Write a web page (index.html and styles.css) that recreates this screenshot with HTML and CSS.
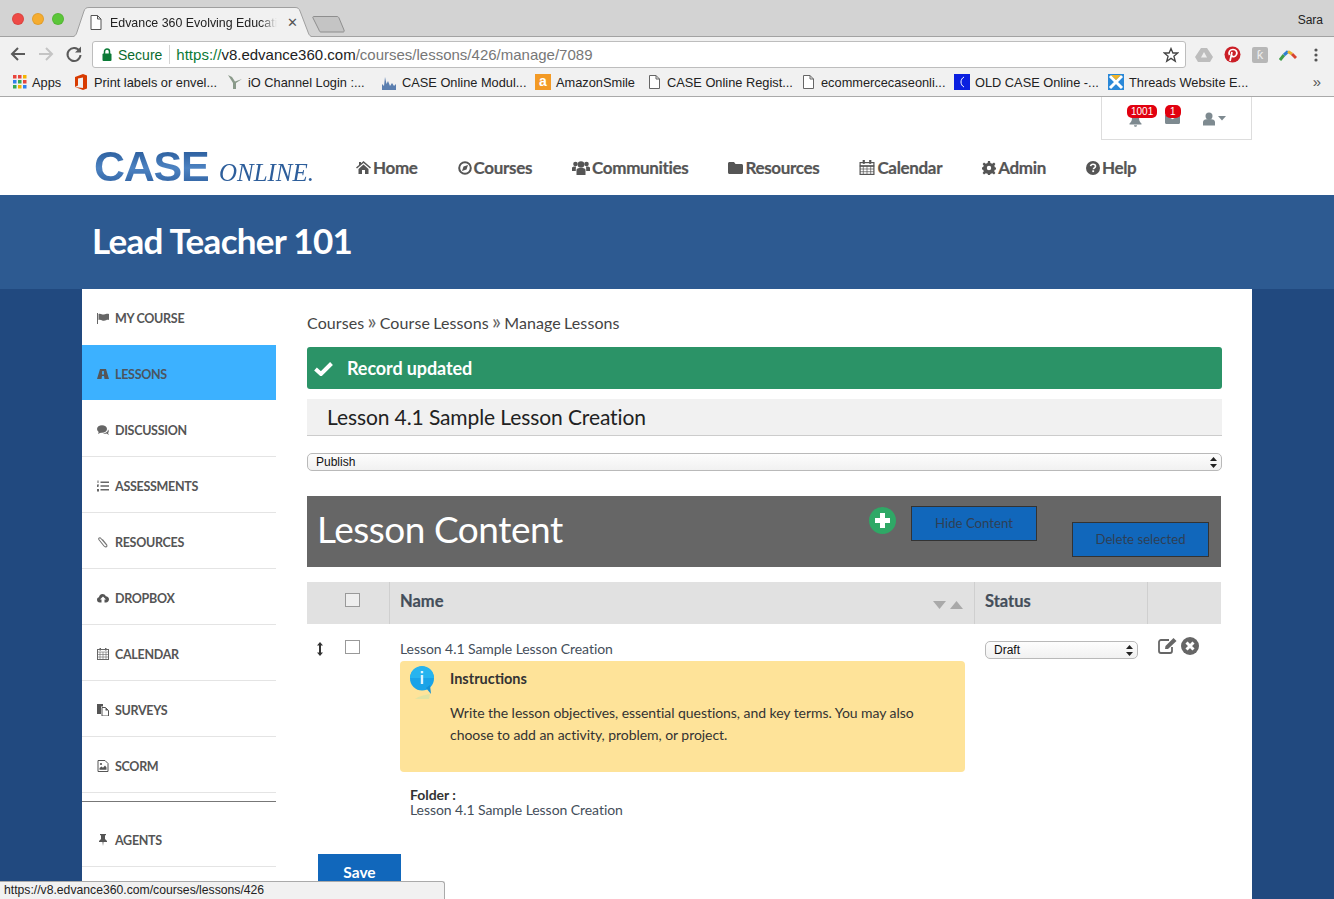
FILE: index.html
```html
<!DOCTYPE html>
<html lang="en">
<head>
<meta charset="utf-8">
<title>Edvance 360 Evolving Education</title>
<link rel="stylesheet" href="styles.css">
</head>
<body>
<div class="browser">
  <div class="tabstrip">
    <div class="lights"><i class="light red"></i><i class="light amber"></i><i class="light green"></i></div>
    <div class="tab">
      <svg class="tabshape" width="245" height="30" viewBox="0 0 245 30"><path d="M0 30C5 30 6 28 7 25L14 4C15 1.500 16 .5 19 .5H225C228 .5 229 1.500 230 4L238 25C239 28 240 30 245 30" fill="#f1f1f1" stroke="#9f9f9f"/></svg>
      <svg class="docicon tabdoc" width="12" height="15" viewBox="0 0 12 15"><path d="M1 .5H7.500L11 4V14.500H1Z M7.500 .5V4H11" fill="#fff" stroke="#555"/></svg>
      <span class="tabtitle">Edvance 360 Evolving Educati</span>
      <span class="tabclose">✕</span>
    </div>
    <svg class="newtab" width="36" height="20" viewBox="0 0 36 20"><path d="M3 2.500H26C27 2.500 27.500 3 28 4L33 16C33.500 17.500 33 18 32 18H10C9 18 8.500 17.500 8 16L2 4C1.500 3 2 2.500 3 2.500Z" fill="#c4c4c4" stroke="#8e8e8e"/></svg>
    <span class="profile">Sara</span>
  </div>
  <div class="toolbar">
    <svg class="navbtn" width="18" height="18" viewBox="0 0 18 18"><path d="M16 9H3M9 3L3 9L9 15" fill="none" stroke="#5a5a5a" stroke-width="2"/></svg>
    <svg class="navbtn" width="18" height="18" viewBox="0 0 18 18"><path d="M2 9H15M9 3L15 9L9 15" fill="none" stroke="#c4c4c4" stroke-width="2"/></svg>
    <svg class="navbtn" width="18" height="18" viewBox="0 0 18 18"><path d="M14.500 6A6.500 6.500 0 1 0 15.500 10" fill="none" stroke="#5a5a5a" stroke-width="2"/><path d="M16 1.500V7.500H10Z" fill="#5a5a5a"/></svg>
    <div class="omnibox">
      <svg width="10" height="13" viewBox="0 0 10 13"><path d="M2.500 6V3.500a2.500 2.500 0 0 1 5 0V6" fill="none" stroke="#0b7a36" stroke-width="1.500"/><rect x="0.500" y="5.500" width="9" height="7.500" rx="1" fill="#0b7a36"/></svg>
      <span class="secure">Secure</span>
      <span class="omnisep"></span>
      <span class="url"><span class="scheme">https://</span><span class="host">v8.edvance360.com</span>/courses/lessons/426/manage/7089</span>
      <svg class="star" width="16" height="16" viewBox="0 0 16 16"><path d="M8 1.500L9.900 6H14.800L10.900 9.200L12.300 14.200L8 11.400L3.700 14.200L5.100 9.200L1.200 6H6.100Z" fill="none" stroke="#444" stroke-width="1.300"/></svg>
    </div>
    <div class="extensions">
      <svg width="18" height="16" viewBox="0 0 18 16"><path d="M6 1H12L18 10L15 15H3L0 10Z" fill="#bdbdbd"/><path d="M9 5L6 10.500H12Z" fill="#eee"/></svg>
      <svg width="17" height="17" viewBox="0 0 17 17"><circle cx="8.500" cy="8.500" r="8" fill="#cb1f27"/><path d="M6 15L8 6M5.500 9C4 6 6 3.500 9 3.500C12 3.500 13.500 6 12.500 8.500C11.500 11 8.500 11.500 7.500 9.500" fill="none" stroke="#fff" stroke-width="1.700"/></svg>
      <span class="extbox">ƙ</span>
      <svg width="18" height="12" viewBox="0 0 18 12"><path d="M1 11L5 6" stroke="#3f9d4a" stroke-width="3"/><path d="M5 6L9 2.500" stroke="#2f7fd0" stroke-width="3"/><path d="M9 2.500L13 5" stroke="#e7b52c" stroke-width="3"/><path d="M13 5L17 9" stroke="#d8432f" stroke-width="3"/></svg>
      <svg class="menu-dots" width="4" height="14" viewBox="0 0 4 14"><circle cx="2" cy="2" r="1.600" fill="#555"/><circle cx="2" cy="7" r="1.600" fill="#555"/><circle cx="2" cy="12" r="1.600" fill="#555"/></svg>
    </div>
  </div>
  <div class="bookmarks">
    <span class="bm bm-apps"><svg width="16" height="14" viewBox="-2 0 16 14"><rect width="3.500" height="3.500" fill="#e8453c"/><rect x="5" width="3.500" height="3.500" fill="#e8453c"/><rect x="10" width="3.500" height="3.500" fill="#f4b400"/><rect y="5" width="3.500" height="3.500" fill="#2f80ed"/><rect x="5" y="5" width="3.500" height="3.500" fill="#34a853"/><rect x="10" y="5" width="3.500" height="3.500" fill="#e8453c"/><rect y="10" width="3.500" height="3.500" fill="#34a853"/><rect x="5" y="10" width="3.500" height="3.500" fill="#f4b400"/><rect x="10" y="10" width="3.500" height="3.500" fill="#2f80ed"/></svg>Apps</span>
    <span class="bm"><svg width="16" height="16" viewBox="0 0 16 16"><path d="M2 3L10 0L14 1.500V14.500L10 16L2 13L10 14V3.500L5 4.500V11.500L2 13Z" fill="#d83b01"/></svg>Print labels or envel...</span>
    <span class="bm"><svg width="16" height="16" viewBox="0 0 16 16"><path d="M1 1L6 9L6 15H9V9L15 5L8 7.500L5 3Z" fill="#8a9a8a"/></svg>iO Channel Login :...</span>
    <span class="bm"><svg width="16" height="16" viewBox="0 0 16 16"><path d="M1 16V10L3 12L4 3L5.500 10L7 7L9 12L11 9L13 12L15 10V16Z" fill="#5b7fb0"/></svg>CASE Online Modul...</span>
    <span class="bm bm-amz"><span class="amz">a</span>AmazonSmile</span>
    <span class="bm"><svg width="16" height="14" viewBox="0 0 16 14"><path d="M3.500 .5H10L13.500 4V13.500H3.500Z M10 .5V4H13.500" fill="#fff" stroke="#666"/></svg>CASE Online Regist...</span>
    <span class="bm"><svg width="16" height="14" viewBox="0 0 16 14"><path d="M3.500 .5H10L13.500 4V13.500H3.500Z M10 .5V4H13.500" fill="#fff" stroke="#666"/></svg>ecommercecaseonli...</span>
    <span class="bm"><svg width="16" height="16" viewBox="0 0 16 16"><rect width="16" height="16" fill="#0a1fe0"/><path d="M10 3C6 5 6 11 10 13" fill="none" stroke="#fff"/></svg>OLD CASE Online -...</span>
    <span class="bm"><svg width="16" height="16" viewBox="0 0 16 16"><rect width="16" height="16" fill="#2a88d8"/><path d="M2 2L14 14M14 2L2 14" stroke="#fff" stroke-width="3"/><path d="M3 1H13L8 6Z" fill="#f0b429"/></svg>Threads Website E...</span>
    <span class="bm-more">»</span>
  </div>
</div>

<div class="page">
  <header class="site-head">
    <div class="userbar-row">
      <div class="userbar">
        <span class="alert">
          <svg class="ub-icon" width="15" height="15" viewBox="0 0 15 15"><path d="M7.500 1C4.500 1 4 3.500 4 6C4 9 3 10 1.500 11.500V12.500H13.500V11.500C12 10 11 9 11 6C11 3.500 10.500 1 7.500 1ZM6 13.200H9C9 15.200 6 15.200 6 13.200Z" fill="#7e8a90"/></svg>
          <b class="badge badge-bell">1001</b>
        </span>
        <span class="alert">
          <svg class="ub-icon" width="15" height="12" viewBox="0 0 15 12"><path d="M0 2.800L7.500 7.300L15 2.800V10.500C15 11.300 14.500 12 13.500 12H1.500C.5 12 0 11.300 0 10.500ZM1.500 0H13.500C14.500 0 15 .5 15 1.200L7.500 5.500L0 1.200C0 .5 .5 0 1.500 0Z" fill="#7e8a90"/></svg>
          <b class="badge badge-mail">1</b>
        </span>
        <svg class="ub-user" width="24" height="14" viewBox="0 0 24 14"><circle cx="6" cy="4" r="3.500" fill="#7e8a90"/><path d="M0 13.500V10C0 8 2 7 6 7C10 7 12 8 12 10V13.500Z" fill="#7e8a90"/><path d="M15 4H23L19 8.500Z" fill="#7e8a90"/></svg>
      </div>
    </div>
    <div class="brandrow">
      <div class="logo"><span class="logo-case">CASE</span><span class="logo-online">ONLINE.</span></div>
      <nav class="mainnav">
        <a class="navitem"><svg width="15" height="13" viewBox="0 0 15 13"><path d="M7.500 0L15 6.500L14 7.500L7.500 2L1 7.500L0 6.500L3 4V1H5V2.300ZM2.500 8L7.500 3.500L12.500 8V13H9V9H6V13H2.500Z" fill="#555"/></svg>Home</a>
        <a class="navitem"><svg width="14" height="14" viewBox="0 0 14 14"><circle cx="7" cy="7" r="5.800" fill="none" stroke="#555" stroke-width="2"/><path d="M4 10L5.500 5.500L10 4L8.500 8.500Z" fill="#555"/></svg>Courses</a>
        <a class="navitem"><svg width="18" height="14" viewBox="0 0 18 14"><circle cx="3.500" cy="3" r="2.300" fill="#555"/><circle cx="14.500" cy="3" r="2.300" fill="#555"/><circle cx="9" cy="3.500" r="3.300" fill="#555"/><path d="M0 10V7C0 6 1 5.500 3.500 5.500L4 5.500C3.800 8 3.800 9 3.800 10ZM18 10V7C18 6 17 5.500 14.500 5.500L14 5.500C14.200 8 14.200 9 14.200 10ZM4.500 14V9C4.500 7.500 6 7 9 7C12 7 13.500 7.500 13.500 9V14Z" fill="#555"/></svg>Communities</a>
        <a class="navitem"><svg width="15" height="13" viewBox="0 0 15 13"><path d="M1.500 1H6L7.500 3H13.500C14.300 3 15 3.700 15 4.500V11.500C15 12.300 14.300 13 13.500 13H1.500C.7 13 0 12.300 0 11.500V2.500C0 1.700 .7 1 1.500 1Z" fill="#555"/></svg>Resources</a>
        <a class="navitem"><svg width="16" height="15" viewBox="0 0 15 15"><rect x=".6" y="2.600" width="13.800" height="11.800" fill="none" stroke="#555" stroke-width="1.200"/><path d="M.5 5.500H14.500V6.500H.5ZM3.500 0H5V3.500H3.500ZM10 0H11.500V3.500H10ZM.5 9H14.500M.5 11.700H14.500M3.800 6V14M7.500 6V14M11.200 6V14" fill="#555" stroke="#555" stroke-width=".7"/></svg>Calendar</a>
        <a class="navitem"><svg width="14" height="14" viewBox="0 0 14 14"><path d="M6 0H8L8.400 2L10.200 2.700L12 1.600L13.400 3L12.300 4.800L13 6.500L14 6.500V8.500L12.800 8.800L12.200 10.200L13.400 12L12 13.400L10.200 12.200L8.400 13L8 14H6L5.600 12.800L3.800 12.200L2 13.400L.6 12L1.800 10.200L1.100 8.800L0 8.500V6.500L1.100 6L1.800 4.800L.6 3L2 1.600L3.800 2.700L5.600 2ZM7 4.800A2.200 2.200 0 1 0 7 9.200A2.200 2.200 0 1 0 7 4.800Z" fill="#555" fill-rule="evenodd"/></svg>Admin</a>
        <a class="navitem"><svg width="14" height="14" viewBox="0 0 14 14"><circle cx="7" cy="7" r="7" fill="#555"/><path d="M4.600 5.200C4.800 3.800 5.800 3.200 7 3.200C8.500 3.200 9.500 4 9.500 5.200C9.500 6.800 7.400 6.800 7.400 8.300" fill="none" stroke="#fff" stroke-width="1.600"/><rect x="6.300" y="9.300" width="1.800" height="1.800" fill="#fff"/></svg>Help</a>
      </nav>
    </div>
  </header>

  <div class="course-band"><h1 class="course-title">Lead Teacher 101</h1></div>

  <div class="shell">
    <aside class="sidebar">
      <a class="side-item"><svg width="12" height="11" viewBox="0 0 12 11"><path d="M0 0H1V11H0ZM1.500 1C4 0 5 2 7 1.500C9 1 10 .5 12 1V7C10 6.500 9 7.500 7 7.800C5 8 4 6 1.500 7Z" fill="#666"/></svg>MY COURSE</a>
      <a class="side-item side-active"><svg width="12" height="10" viewBox="0 0 12 10"><path d="M3 0H9L12 10H7.500L7 7H5L4.500 10H0ZM5.200 2L5 5.500H7L6.800 2Z" fill="#555" fill-rule="evenodd"/></svg>LESSONS</a>
      <a class="side-item"><svg width="12" height="10" viewBox="0 0 12 10"><ellipse cx="5" cy="4" rx="5" ry="3.800" fill="#666"/><path d="M2 6L1 9L5 7ZM9 7.500C10 7 11 6 11 4.500C12 5.500 12 7 11 8L12 10L9.500 8.500C8.500 8.800 7 8.800 6 8.200C7.500 8.300 8.500 8 9 7.500Z" fill="#666"/></svg>DISCUSSION</a>
      <a class="side-item"><svg width="12" height="12" viewBox="0 0 12 12"><path d="M3.500 1.500H12V3H3.500ZM3.500 5.200H12V6.700H3.500ZM3.500 9H12V10.500H3.500ZM.5 .5H1.500V3H.5ZM0 4.500H2V5.200L.8 6.500H2V7H0ZM0 9H2V11.500H0Z" fill="#666"/></svg>ASSESSMENTS</a>
      <a class="side-item"><svg width="11" height="12" viewBox="0 0 11 12"><path d="M9.500 9.500L3.500 2.500C2.500 1 .5 2 1.500 3.800L6.500 10C8 11.800 10.500 10.500 9 8.500L5 3.500" fill="none" stroke="#777" stroke-width="1.100"/></svg>RESOURCES</a>
      <a class="side-item"><svg width="12" height="10" viewBox="0 0 12 10"><path d="M2.800 9.500C1 9.500 0 8.300 0 6.800C0 5.500 .8 4.500 2 4.300C2.200 2.500 3.500 1 5.500 1C7 1 8.200 1.800 8.800 3.200C10.500 3.200 12 4.500 12 6.300C12 8 10.700 9.500 9 9.500H7.500V6.500H9L6 3.500L3 6.500H4.500V9.500Z" fill="#555"/></svg>DROPBOX</a>
      <a class="side-item"><svg width="12" height="12" viewBox="0 0 12 12"><rect x=".5" y="1.500" width="11" height="10" fill="none" stroke="#666"/><path d="M.5 4H11.500M.5 6.500H11.500M.5 9H11.500M3 4V11M6 4V11M9 4V11" stroke="#666" stroke-width=".6"/><path d="M2.500 0H4V2.500H2.500ZM8 0H9.500V2.500H8Z" fill="#666"/></svg>CALENDAR</a>
      <a class="side-item"><svg width="12" height="12" viewBox="0 0 12 12"><path d="M0 0H6V2.500H4V10H0Z" fill="#555"/><path d="M5 3.500H8.500L11.500 6.500V12H5Z" fill="#fff" stroke="#555"/><path d="M8.500 3.500V6.500H11.500" fill="#555"/></svg>SURVEYS</a>
      <a class="side-item"><svg width="11" height="12" viewBox="0 0 11 12"><path d="M.5 .5H7.500L10.500 3.500V11.500H.5Z" fill="none" stroke="#555"/><circle cx="3.500" cy="4" r="1.100" fill="#555"/><path d="M2 9.800V8L4 6.500L5.500 7.800L7.500 5.500L9 7.500V9.800Z" fill="#555"/></svg>SCORM</a>
      <div class="side-spacer"></div>
      <a class="side-item"><svg width="9" height="12" viewBox="0 0 9 12"><path d="M1.500 0H7.500V1L6.500 1.500V5L8.500 7V8H5L4.500 12L4 8H.5V7L2.500 5V1.500L1.500 1Z" fill="#555"/></svg>AGENTS</a>
    </aside>

    <main class="content">
      <div class="crumbs">Courses <span class="crumb-sep">»</span> Course Lessons <span class="crumb-sep">»</span> Manage Lessons</div>
      <div class="notice"><svg width="19" height="15" viewBox="0 0 19 15"><path d="M1.500 8L7 13L17.500 2.500" fill="none" stroke="#fff" stroke-width="4"/></svg>Record updated</div>
      <h2 class="lesson-head">Lesson 4.1 Sample Lesson Creation</h2>
      <div class="fake-select wide"><span>Publish</span><svg width="7" height="11" viewBox="0 0 7 11"><path d="M3.500 0L7 4H0ZM3.500 11L0 7H7Z" fill="#222"/></svg></div>

      <section class="content-bar">
        <h2 class="content-title">Lesson Content</h2>
        <div class="bar-actions">
          <span class="add-btn"><svg width="27" height="27" viewBox="0 0 27 27"><circle cx="13.500" cy="13.500" r="13.500" fill="#2fa866"/><path d="M11 6H16V11H21V16H16V21H11V16H6V11H11Z" fill="#fff"/></svg></span>
          <button class="blue-btn hide-btn">Hide Content</button>
          <button class="blue-btn del-btn">Delete selected</button>
        </div>
      </section>

      <div class="table">
        <div class="thead">
          <div class="c-check"><span class="cbox"></span></div>
          <div class="c-name"><span>Name</span><svg width="30" height="8" viewBox="0 0 30 8"><path d="M0 0H13L6.500 8ZM17 8L23.500 0L30 8Z" fill="#a9a9a9"/></svg></div>
          <div class="c-status"><span>Status</span></div>
          <div class="c-act"></div>
        </div>
        <div class="trow">
          <div class="r-check">
            <svg class="mover" width="6" height="14" viewBox="0 0 6 14"><path d="M3 0L6 3.500H4V10.500H6L3 14L0 10.500H2V3.500H0Z" fill="#333"/></svg>
            <span class="cbox"></span>
          </div>
          <div class="r-name">
            <div class="lesson-link">Lesson 4.1 Sample Lesson Creation</div>
            <div class="callout">
              <svg class="info" width="26" height="34" viewBox="0 0 26 34"><ellipse cx="13" cy="12.500" rx="12" ry="12" fill="#1aa3e8"/><path d="M1 12A12 12 0 0 1 25 12Z" fill="#27b4ef"/><path d="M17 22L22 28L21 19Z" fill="#1391d6"/><path d="M11.800 5H14.200V7.200H11.800ZM11.800 9H14.200V18H11.800Z" fill="#dff4fd"/><path d="M6 33C10 30 16 29 21 28L20 33Z" fill="#cfe3a8" opacity=".6"/></svg>
              <div class="callout-title">Instructions</div>
              <p class="callout-text">Write the lesson objectives, essential questions, and key terms. You may also choose to add an activity, problem, or project.</p>
            </div>
            <div class="folder"><strong>Folder :</strong><br>Lesson 4.1 Sample Lesson Creation</div>
          </div>
          <div class="r-status">
            <div class="fake-select narrow"><span>Draft</span><svg width="7" height="11" viewBox="0 0 7 11"><path d="M3.500 0L7 4H0ZM3.500 11L0 7H7Z" fill="#222"/></svg></div>
          </div>
          <div class="r-act">
            <svg width="20" height="17" viewBox="0 0 20 17"><path d="M11 3H3C2 3 1 4 1 5V14C1 15 2 16 3 16H12C13 16 14 15 14 14V10" fill="none" stroke="#666" stroke-width="1.800"/><path d="M7 12L7.500 9L15.500 1L18.500 4L10 12Z" fill="#666"/></svg>
            <svg width="18" height="18" viewBox="0 0 18 18"><circle cx="9" cy="9" r="9" fill="#666"/><path d="M5.500 5.500L12.500 12.500M12.500 5.500L5.500 12.500" stroke="#fff" stroke-width="3"/></svg>
          </div>
        </div>
      </div>
      <button class="save-btn">Save</button>
    </main>
  </div>
</div>
<div class="statusbubble">https://v8.edvance360.com/courses/lessons/426</div>
</body>
</html>
```
FILE: styles.css
```css
* { box-sizing: border-box; }
html, body { margin: 0; height: 899px; overflow: hidden; background: #21497f; }
body { font-family: "Lato", "Liberation Sans", sans-serif; color: #444; }

/* browser chrome */
.browser { font-family: "Liberation Sans", Arial, sans-serif; color: #222; }
.tabstrip { position: relative; height: 37px; background: #d3d3d3; border-bottom: 1px solid #a2a2a2; }
.lights { display: flex; gap: 8px; padding: 13px 0 0 12px; }
.light { width: 12px; height: 12px; border-radius: 50%; border: 1px solid rgba(0,0,0,.08); }
.red { background: #ee4a46; } .amber { background: #f5ac2f; } .green { background: #5bc639; }
.tab { position: absolute; left: 70px; top: 7px; width: 245px; height: 30px; }
.tabshape { position: absolute; left: 0; top: 0; }
.tabdoc { position: absolute; left: 20px; top: 8px; }
.tabtitle { position: absolute; left: 40px; top: 9px; white-space: nowrap; font-size: 12.400px; line-height: 15px; -webkit-mask-image: linear-gradient(90deg,#000 90%,transparent); mask-image: linear-gradient(90deg,#000 90%,transparent); }
.tabclose { position: absolute; left: 217px; top: 8px; font-size: 13px; line-height: 15px; color: #555; }
.newtab { position: absolute; left: 311px; top: 14px; }
.profile { position: absolute; right: 11px; top: 13px; font-size: 12px; color: #222; }

.toolbar { height: 33px; background: #f1f1f1; display: flex; align-items: center; padding: 0 0 0 9px; }
.navbtn { margin-right: 10px; }
.omnibox { width: 1094px; height: 27px; margin-left: -1px; margin-top: 2px; background: #fff; border: 1px solid #bdbdbd; border-radius: 3px; display: flex; align-items: center; padding-left: 9px; }
.secure { color: #0b6b2f; font-size: 14px; margin-left: 6px; }
.omnisep { width: 1px; height: 19px; background: #d4d4d4; margin: 0 6px 0 7px; }
.url { font-size: 15px; color: #777; white-space: nowrap; }
.scheme { color: #0b7a36; }
.host { color: #222; }
.star { margin-left: auto; margin-right: 6px; }
.extensions { display: flex; align-items: center; gap: 11px; flex: 1; padding: 2px 0 0 9px; }
.extbox { width: 16px; height: 16px; background: #b7b7b7; border-radius: 2px; color: #eee; font-size: 13px; text-align: center; line-height: 16px; }
.menu-dots { margin-left: 6px; }

.bookmarks { height: 27px; background: #f1f1f1; border-bottom: 1px solid #a9a9a9; display: flex; align-items: center; padding: 0 0 2px 11px; font-size: 12.800px; white-space: nowrap; position: relative; }
.bm { display: flex; align-items: center; gap: 5px; width: 154px; flex: none; }
.bm svg { flex: none; }
.bm-apps { width: 62px; }
.bm-amz { width: 111px; }
.amz { width: 16px; height: 16px; background: #f39a25; color: #fff; font-weight: bold; font-size: 14px; line-height: 14px; text-align: center; }
.bm-more { position: absolute; right: 13px; top: 3px; font-size: 15px; color: #555; }

/* site */
.page { height: 802px; overflow: hidden; display: flex; flex-direction: column; }
.site-head { height: 98px; background: #fff; flex: none; }
.userbar-row { display: flex; justify-content: flex-end; padding-right: 82px; height: 43px; }
.userbar { width: 151px; height: 43px; border: 1px solid #ddd; border-top: 0; display: flex; align-items: center; padding: 0 0 0 26px; }
.alert { position: relative; display: block; width: 15px; height: 15px; margin-right: 23px; margin-top: 2px; }
.alert + .alert { margin-left: -1px; margin-right: 23px; }
.ub-icon { display: block; }
.badge { position: absolute; top: -7px; left: -1px; background: #e1000f; color: #fff; font: 10px/13px "Liberation Sans", Arial, sans-serif; border-radius: 5px; padding: 0 4px; }
.badge-mail { left: 0; padding: 0 5px; }
.ub-user { margin-top: 2px; }
.brandrow { display: flex; align-items: center; padding: 0 0 0 94px; height: 55px; }
.logo { width: 262px; display: flex; align-items: baseline; margin-top: -3px; }
.logo-case { font-family: "Liberation Sans", sans-serif; font-size: 43px; font-weight: bold; line-height: 44px; letter-spacing: -1.300px; background: linear-gradient(#1f5190,#4d83c2 55%,#2a5c9c); -webkit-background-clip: text; background-clip: text; color: transparent; }
.logo-online { font-family: "Liberation Serif", serif; font-size: 26px; font-style: italic; margin-left: 11px; transform: scaleX(.96); transform-origin: left; color: #2d5e9b; }
.mainnav { display: flex; gap: 40px; }
.navitem { display: flex; align-items: center; gap: 2px; font-size: 17px; font-weight: bold; color: #555; letter-spacing: -.33px; -webkit-text-stroke: .2px #555; }
.course-band { height: 94px; flex: none; background: #2d5a91; padding: 0 0 0 92px; }
.course-title { margin: 0; font-size: 35px; font-weight: bold; color: #fff; line-height: 90px; letter-spacing: -.7px; }

.shell { flex: 1; margin: 0 82px; background: #fff; display: flex; min-height: 0; }
.sidebar { width: 194px; flex: none; }
.side-item { height: 56px; display: flex; align-items: center; padding: 3px 0 0 15px; gap: 6px; font-size: 12.500px; font-weight: bold; color: #555; border-bottom: 1px solid #e4e4e4; letter-spacing: -.3px; }
.side-item svg { flex: none; width: 12px; }
.side-item:first-child { border-bottom: 0; }
.side-active { background: #3cb1ff; border-bottom: 0; height: 55px; margin-bottom: 1px; color: #4b5560; }
.side-spacer { height: 9px; border-bottom: 1px solid #777; margin-bottom: 9px; }

.content { flex: 1; min-width: 0; padding: 0 30px 0 31px; }
.crumbs { height: 58px; padding-top: 24px; font-size: 16px; line-height: 19px; color: #444; letter-spacing: .1px; word-spacing: -1px; }
.crumb-sep { color: #666; font-size: 21px; line-height: 0; letter-spacing: 0; }
.notice { height: 42px; background: #2b9367; border-radius: 3px; color: #fff; font-size: 18px; font-weight: bold; display: flex; align-items: center; gap: 14px; padding-left: 7px; letter-spacing: -.1px; }
.lesson-head { margin: 10px 0 17px; height: 37px; background: #f1f1f1; border-bottom: 1px solid #ccc; padding-left: 20px; font-size: 21px; font-weight: normal; line-height: 35px; color: #222; letter-spacing: -.1px; }
.fake-select { display: flex; align-items: center; justify-content: space-between; height: 18px; border: 1px solid #b9b9b9; border-radius: 5px; background: linear-gradient(#fdfdfd,#f1f1f1); font: 12px "Liberation Sans", Arial, sans-serif; color: #111; padding: 0 4px 0 8px; }
.content-bar { margin: 25px 0 15px; width: 914px; height: 71px; background: #666; position: relative; display: flex; align-items: center; padding: 0 0 6px 10px; }
.content-title { margin: 0; font-size: 37px; font-weight: normal; color: #fff; letter-spacing: -.48px; }
.bar-actions { position: absolute; inset: 0; }
.add-btn { position: absolute; left: 562px; top: 11px; line-height: 0; }
.blue-btn { position: absolute; background: #1167bb; border: 1px solid #333; color: #2e3f55; font: 13.200px "Lato", sans-serif; padding: 0 0 2px; }
.hide-btn { left: 604px; top: 10px; width: 126px; height: 35px; }
.del-btn { left: 765px; top: 26px; width: 137px; height: 35px; }

.table { width: 914px; }
.thead { height: 42px; background: #e1e1e1; display: grid; grid-template-columns: 83px 585px 173px 73px; font-size: 16.500px; font-weight: bold; color: #444e5a; }
.thead > div { display: flex; align-items: center; border-right: 1px solid #cfcfcf; }
.thead > div:last-child { border-right: 0; }
.thead span { margin-top: -4px; -webkit-text-stroke: .2px #444e5a; }
.c-check { padding-left: 38px; }
.c-name { padding: 0 11px 0 10px; justify-content: space-between; }
.c-name svg { margin-top: 3px; }
.c-status { padding-left: 10px; }
.cbox { display: block; width: 15px; height: 14px; background: #fff; border: 1px solid #999; }
.thead .cbox { background: #eee; margin-top: -6px; -webkit-text-stroke: 0; }
.trow { display: grid; grid-template-columns: 83px 585px 173px 73px; }
.r-check { display: flex; align-items: flex-start; padding: 16px 0 0 10px; gap: 22px; }
.mover { margin-top: 2px; }
.lesson-link { margin-top: 15px; font-size: 14px; line-height: 19px; color: #444e5a; letter-spacing: -.06px; }
.r-name { padding-left: 10px; }
.callout { position: relative; width: 565px; height: 111px; margin-top: 3px; background: #fee399; border-radius: 4px; padding: 9px 20px 0 50px; color: #333; font-size: 14px; }
.info { position: absolute; left: 9px; top: 5px; }
.callout-title { font-weight: bold; font-size: 14.500px; line-height: 18px; }
.callout-text { margin: 14px 0 0; line-height: 22px; letter-spacing: -.05px; }
.folder { margin: 15px 0 0 10px; font-size: 14px; line-height: 15px; color: #444e5a; letter-spacing: -.06px; }
.folder strong { color: #333; }
.r-status { padding: 17px 0 0 10px; }
.narrow { width: 153px; height: 18px; }
.r-act { padding: 13px 0 0 10px; display: flex; align-items: flex-start; gap: 3px; }
.save-btn { display: block; margin: 37px 0 0 11px; width: 83px; height: 36px; background: #1167bb; color: #fff; border: 0; font: bold 15.500px/36px "Lato", sans-serif; padding: 0; }

.statusbubble { position: absolute; left: 0; top: 881px; width: 445px; height: 18px; background: #f1f1f1; border: 1px solid #aaa; border-left: 0; border-bottom: 0; border-radius: 0 3px 0 0; font: 12.200px/17px "Liberation Sans", Arial, sans-serif; color: #222; padding-left: 4px; }
```
